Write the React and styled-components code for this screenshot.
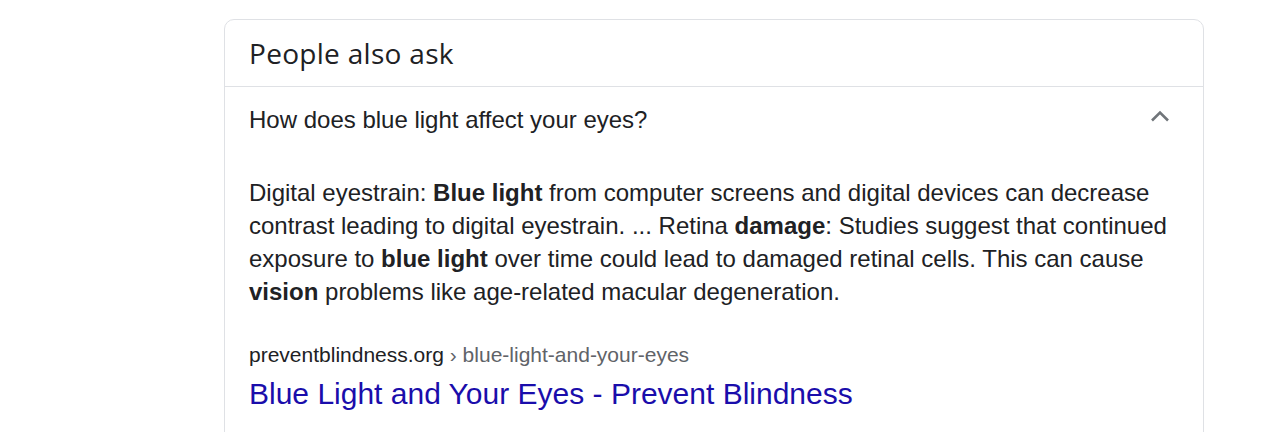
import React from "react";
import styled, { createGlobalStyle } from "styled-components";

const Global = createGlobalStyle`
    body {
        margin:0;
        background:#fff;
        font-family:"Liberation Sans", Arial, sans-serif;
        color:#202124;
    }
`;

const Page = styled.div`
    padding:19px 0 0 224px;
    height:413px;
    overflow:hidden;
`;

const Card = styled.div`
    width:978px;
    border:1px solid #dfe1e5;
    border-radius:10px;
    min-height:440px;
`;

const Heading = styled.div`
    height:66px;
    display:flex;
    align-items:center;
    padding:0 24px;
    font-family:"Open Sans", Roboto, sans-serif;
    font-size:28px;
    letter-spacing:0.3px;
    color:#202124;
    border-bottom:1px solid #dfe1e5;
`;

const Question = styled.div`
    display:flex;
    align-items:center;
    justify-content:space-between;
    padding:0 33px 0 24px;
    height:66px;
    font-size:24px;
    color:#202124;
`;

const Chevron = styled.svg`
    width:20px;
    height:12px;
    margin-top:-8px;
    fill:none;
    stroke:#70757a;
    stroke-width:2.6;
`;

const Answer = styled.div`
    padding:23px 24px 0;
    font-size:24px;
    line-height:33px;
    color:#202124;
    b { font-weight:bold; }
`;

const Source = styled.div`
    padding:35px 24px 0;
`;

const Crumb = styled.div`
    font-size:21px;
    line-height:24px;
    color:#202124;
    span { color:#5f6368; }
`;

const TitleLink = styled.a`
    display:block;
    margin-top:9px;
    font-size:30px;
    line-height:36px;
    color:#1a0dab;
    text-decoration:none;
`;

export default function App() {
    return (
        <Page>
            <Global />
            <Card>
                <Heading>People also ask</Heading>
                <Question>
                    How does blue light affect your eyes?
                    <Chevron viewBox="0 0 20 12"><polyline points="2,10.5 10,2.5 18,10.5" /></Chevron>
                </Question>
                <Answer>
                    Digital eyestrain: <b>Blue light</b> from computer screens and digital devices can decrease contrast leading to digital eyestrain. ... Retina <b>damage</b>: Studies suggest that continued exposure to <b>blue light</b> over time could lead to damaged retinal cells. This can cause <b>vision</b> problems like age-related macular degeneration.
                </Answer>
                <Source>
                    <Crumb>preventblindness.org <span>› blue-light-and-your-eyes</span></Crumb>
                    <TitleLink href="#">Blue Light and Your Eyes - Prevent Blindness</TitleLink>
                </Source>
            </Card>
        </Page>
    );
}
